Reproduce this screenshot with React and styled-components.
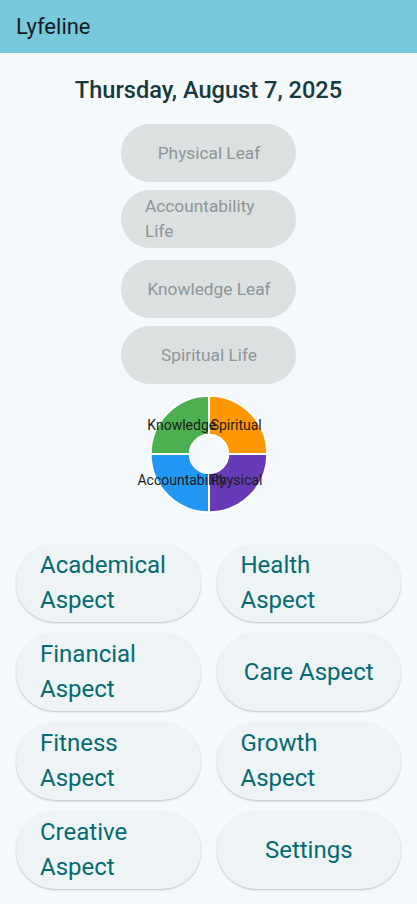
import React from 'react'
import styled, { createGlobalStyle } from 'styled-components'

const GlobalStyle = createGlobalStyle`
  html, body {
    margin: 0;
    padding: 0;
    background: #f4f9fb;
    font-family: Roboto, "Noto Sans", sans-serif;
    overflow: hidden;
  }
`

const Screen = styled.div`
  width: 417px;
  min-height: 904px;
  background: #f4f9fb;
  display: flex;
  flex-direction: column;
`

const AppBar = styled.header`
  height: 53px;
  background: #78c8db;
  display: flex;
  align-items: center;
  padding: 0 16px;
  box-sizing: border-box;
`

const Title = styled.h1`
  margin: 0;
  font-size: 22px;
  font-weight: 400;
  color: #171d1e;
`

const Body = styled.main`
  display: flex;
  flex-direction: column;
  align-items: center;
`

const DateText = styled.h2`
  margin: 23px 0 0;
  font-size: 23.6px;
  line-height: 28px;
  font-weight: 500;
  color: #173a40;
`

const PillStack = styled.div`
  margin-top: 20px;
  display: flex;
  flex-direction: column;
  gap: 8px;
`

const LeafPill = styled.button`
  width: 175px;
  height: 58px;
  margin-top: ${(p) => (p.$spaced ? '4px' : '0')};
  border: none;
  border-radius: 29px;
  background: #dbe0e1;
  color: #8f9597;
  font-family: Roboto, sans-serif;
  font-size: 17.3px;
  line-height: 25px;
  padding: 0 23px 0 24px;
  box-sizing: border-box;
  display: flex;
  align-items: center;
  justify-content: center;

  span {
    text-align: left;
  }
`

const ChartBox = styled.div`
  margin-top: 5px;
  width: 417px;
  height: 130px;
  display: flex;
  justify-content: center;
`

const Grid = styled.div`
  margin-top: 25px;
  width: 100%;
  box-sizing: border-box;
  padding: 0 16px;
  display: grid;
  grid-template-columns: 1fr 1fr;
  column-gap: 16px;
  row-gap: 11px;
`

const AspectButton = styled.button`
  height: 78px;
  border: none;
  border-radius: 39px;
  background: #eef3f5;
  box-shadow: 0 1px 2px rgba(0, 0, 0, 0.22);
  color: #046b74;
  font-family: Roboto, sans-serif;
  font-size: 24px;
  line-height: 35px;
  padding: 0 24px;
  box-sizing: border-box;
  display: flex;
  align-items: center;
  justify-content: center;

  span {
    text-align: left;
  }
`

const leaves = [
  { label: 'Physical Leaf' },
  { label: 'Accountability Life' },
  { label: 'Knowledge Leaf', spaced: true },
  { label: 'Spiritual Life' },
]

const slices = [
  { name: 'Spiritual', color: '#ff9800', start: -90 },
  { name: 'Physical', color: '#673ab7', start: 0 },
  { name: 'Accountability', color: '#2196f3', start: 90 },
  { name: 'Knowledge', color: '#4caf50', start: 180 },
]

const aspects = [
  'Academical Aspect',
  'Health Aspect',
  'Financial Aspect',
  'Care Aspect',
  'Fitness Aspect',
  'Growth Aspect',
  'Creative Aspect',
  'Settings',
]

function arcPath(cx, cy, r0, r1, a0, a1) {
  const rad = (a) => (a * Math.PI) / 180
  const p = (r, a) => [cx + r * Math.cos(rad(a)), cy + r * Math.sin(rad(a))]
  const [x1, y1] = p(r1, a0)
  const [x2, y2] = p(r1, a1)
  const [x3, y3] = p(r0, a1)
  const [x4, y4] = p(r0, a0)
  return `M${x1} ${y1} A${r1} ${r1} 0 0 1 ${x2} ${y2} L${x3} ${y3} A${r0} ${r0} 0 0 0 ${x4} ${y4} Z`
}

function Donut() {
  const cx = 65
  const cy = 65
  return (
    <svg width="130" height="130" viewBox="0 0 130 130" style={{ overflow: 'visible' }}>
      {slices.map((s) => (
        <path
          key={s.name}
          d={arcPath(cx, cy, 19.3, 58.3, s.start, s.start + 90)}
          fill={s.color}
          stroke="#ffffff"
          strokeWidth="2"
        />
      ))}
      {slices.map((s) => {
        const a = ((s.start + 45) * Math.PI) / 180
        return (
          <text
            key={s.name + '-l'}
            x={cx + 38.5 * Math.cos(a)}
            y={cy + 38.5 * Math.sin(a)}
            textAnchor="middle"
            dominantBaseline="middle"
            fontFamily="Roboto, sans-serif"
            fontSize="14"
            fill="#1c1c1c"
          >
            {s.name}
          </text>
        )
      })}
    </svg>
  )
}

export default function App() {
  return (
    <Screen>
      <GlobalStyle />
      <AppBar>
        <Title>Lyfeline</Title>
      </AppBar>
      <Body>
        <DateText>Thursday, August 7, 2025</DateText>
        <PillStack>
          {leaves.map((l) => (
            <LeafPill key={l.label} $spaced={l.spaced} disabled>
              <span>{l.label}</span>
            </LeafPill>
          ))}
        </PillStack>
        <ChartBox>
          <Donut />
        </ChartBox>
        <Grid>
          {aspects.map((a) => (
            <AspectButton key={a}>
              <span>{a}</span>
            </AspectButton>
          ))}
        </Grid>
      </Body>
    </Screen>
  )
}
